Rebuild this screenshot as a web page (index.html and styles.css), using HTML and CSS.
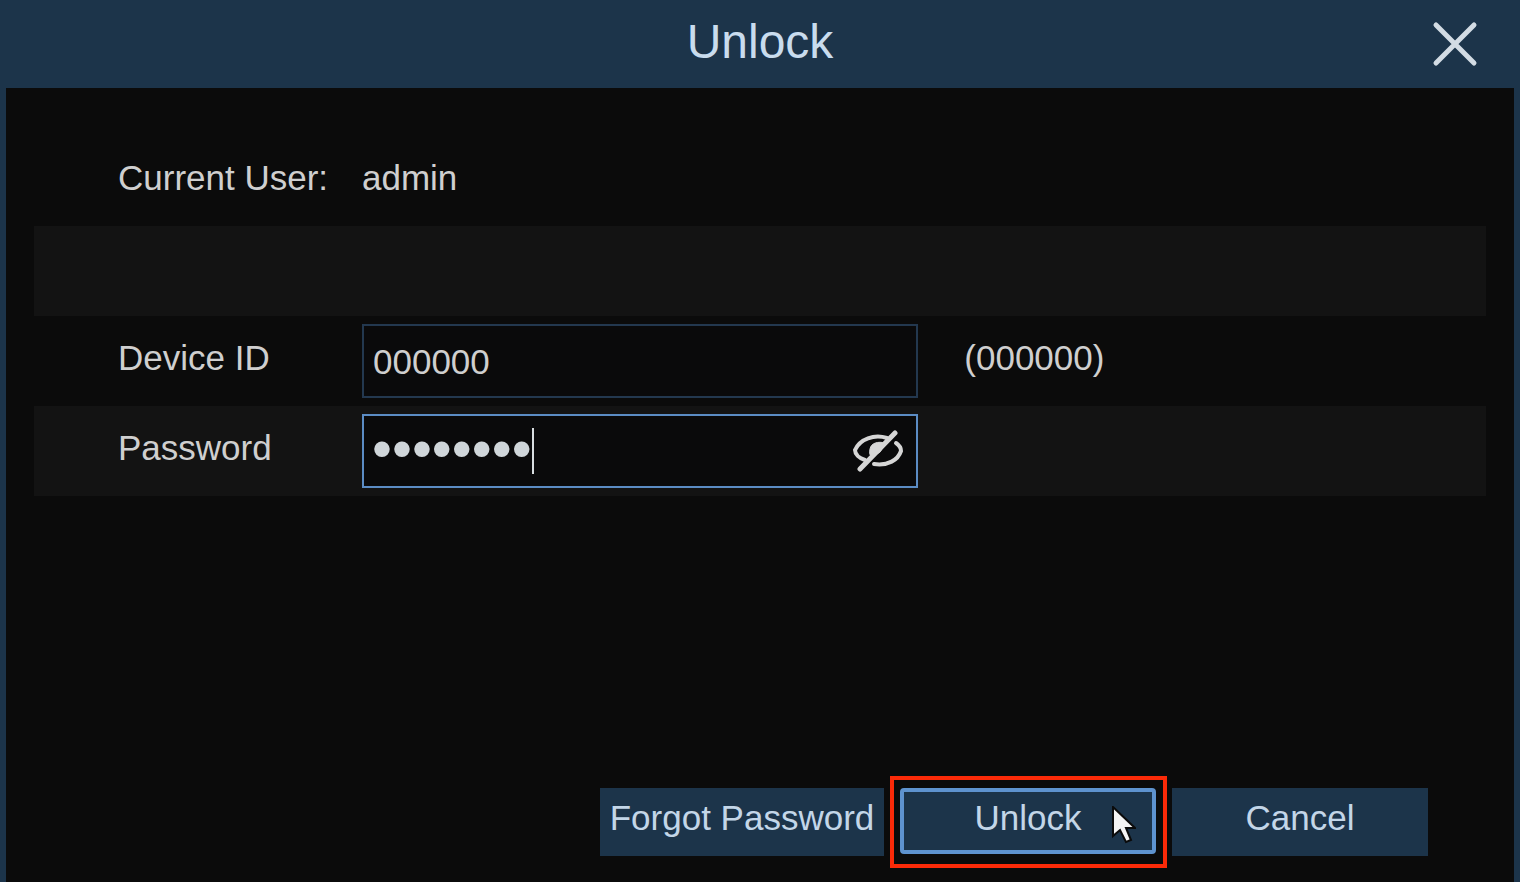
FILE: index.html
```
<!DOCTYPE html>
<html lang="en">
<head>
<meta charset="utf-8">
<title>Unlock</title>
<link rel="stylesheet" href="styles.css">
</head>
<body>
<form class="dialog">
  <header class="titlebar">
    <h1 class="title">Unlock</h1>
    <button class="close" type="button" aria-label="Close">
      <svg viewBox="0 0 46 46" width="46" height="46"><path d="M4 4L42 42M42 4L4 42"/></svg>
    </button>
  </header>
  <main class="content">
    <div class="row">
      <span class="label">Current User:</span>
      <span class="value">admin</span>
    </div>
    <div class="row striped"></div>
    <div class="row">
      <label class="label" for="device">Device ID</label>
      <input class="field" id="device" type="text" value="000000">
      <span class="note">(000000)</span>
    </div>
    <div class="row striped">
      <label class="label" for="password">Password</label>
      <div class="secret">
        <input class="field active" id="password" type="password" value="password">
        <span class="caret"></span>
        <button class="reveal" type="button" aria-label="Show password">
          <svg viewBox="0 0 52 42" width="52" height="42">
            <path class="line" d="M35 8C22 4 8 9 3 20C3 24 7 28 13 30M44 13C47 15 49 18 49 21C46 30 36 36 22 34"/>
            <path class="slash" d="M43 3L8 39"/>
            <path class="pupil" d="M33 13C26 11 19 13 18 19C17 23 18 26 20 27L28 22Z"/>
          </svg>
        </button>
      </div>
    </div>
  </main>
  <footer class="actions">
    <button class="button" type="button">Forgot Password</button>
    <div class="marked">
      <button class="button primary" type="submit">Unlock</button>
      <svg class="pointer" viewBox="0 0 24 38" width="24" height="38"><path d="M1 1V30L8 24L14 36L19 34L14 22H23Z"/></svg>
    </div>
    <button class="button" type="button">Cancel</button>
  </footer>
</form>
</body>
</html>
```
FILE: styles.css
```
* { box-sizing: border-box; }

body {
  margin: 0;
  background: #0b0b0b;
  color: #cfcfcf;
  font: 35px/40px "Liberation Sans", Arial, sans-serif;
}

.dialog {
  display: flex;
  flex-direction: column;
  min-height: 100vh;
  border: solid #1c344a;
  border-width: 0 6px;
}

.titlebar {
  display: grid;
  grid-template-columns: 1fr auto 1fr;
  align-items: center;
  height: 88px;
  padding: 0 36px;
  background: #1c344a;
}

.title {
  grid-column: 2;
  margin: 0;
  padding-bottom: 4px;
  color: #c9dcee;
  font-size: 48px;
  font-weight: 400;
  line-height: 52px;
}

.close, .reveal {
  display: flex;
  padding: 0;
  border: 0;
  background: none;
}

.close { justify-self: end; }
.close path { stroke: #d3dce4; stroke-width: 5; stroke-linecap: round; }

.content { flex: 1; padding: 48px 28px; }

.row {
  display: grid;
  grid-template-columns: 244px 49fr 50fr;
  align-items: center;
  height: 90px;
  padding-left: 84px;
}

.striped { background: #131313; }
.label, .value, .note { padding-bottom: 6px; }
.note { padding-left: 46px; }

.field {
  width: 100%;
  height: 74px;
  padding: 2px 9px 0;
  border: 2px solid #23384f;
  border-radius: 0;
  outline: 0;
  background: #0a0a0b;
  color: #cfcfcf;
  font: inherit;
}

.secret { position: relative; }
.secret .field {
  display: block;
  border-color: #5b8cc4;
  padding: 0 80px 6px 8px;
  color: #d0d6da;
  font-size: 57px;
}

.caret {
  position: absolute;
  left: 170px;
  top: 14px;
  width: 2px;
  height: 46px;
  background: #d8dde0;
}

.reveal { position: absolute; right: 14px; top: 16px; }
.reveal path { fill: none; stroke: #d6d6d6; stroke-width: 4; stroke-linecap: round; }
.reveal .slash { stroke-width: 5; }
.reveal .pupil { fill: #d6d6d6; stroke-width: 1; }

.actions {
  display: flex;
  justify-content: flex-end;
  gap: 16px;
  padding: 0 86px 26px 28px;
}

.button {
  min-width: 256px;
  height: 68px;
  padding: 0 9px 8px;
  border: 0;
  background: #1c344a;
  color: #c3d6e8;
  font: inherit;
}

.actions > .button:first-child { min-width: 284px; }

.primary {
  display: block;
  height: 66px;
  padding-bottom: 6px;
  border: 4px solid #5e93cf;
  border-radius: 4px;
}

.marked { position: relative; }
.marked::after {
  content: "";
  position: absolute;
  inset: -12px -11px -12px -10px;
  border: 4px solid #fb2a08;
  pointer-events: none;
}

.pointer { position: absolute; right: 20px; top: 18px; }
.pointer path { fill: #f4f4f4; stroke: #0b0b0b; stroke-width: 2; }
```
